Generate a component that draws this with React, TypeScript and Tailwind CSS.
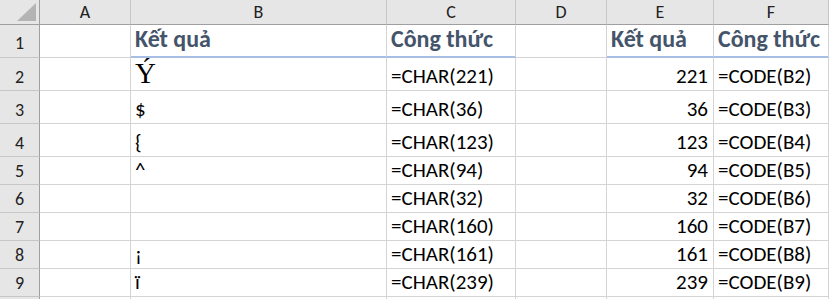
import React from "react";

const font = { fontFamily: "Carlito, Lato, 'Open Sans', sans-serif" };

type Row = { n: number; b?: React.ReactNode; c?: string; e?: string; f?: string };

const rows: Row[] = [
  { n: 2, b: "Ý", c: "=CHAR(221)", e: "221", f: "=CODE(B2)" },
  { n: 3, b: "$", c: "=CHAR(36)", e: "36", f: "=CODE(B3)" },
  { n: 4, b: "{", c: "=CHAR(123)", e: "123", f: "=CODE(B4)" },
  { n: 5, b: "^", c: "=CHAR(94)", e: "94", f: "=CODE(B5)" },
  { n: 6, b: "", c: "=CHAR(32)", e: "32", f: "=CODE(B6)" },
  { n: 7, b: "", c: "=CHAR(160)", e: "160", f: "=CODE(B7)" },
  { n: 8, b: "¡", c: "=CHAR(161)", e: "161", f: "=CODE(B8)" },
  { n: 9, b: "ï", c: "=CHAR(239)", e: "239", f: "=CODE(B9)" },
  { n: 10, b: "", c: "", e: "", f: "" },
];

function RowHead({ n }: { n: number }) {
  return (
    <div className="flex items-end justify-center bg-[#e6e6e6] border-r border-r-[#9f9f9f] border-b border-b-[#c6c6c6] pb-[2px] text-[18px] leading-[22px] text-[#222]">
      {n < 10 ? n : ""}
    </div>
  );
}

function Cell({ children, right }: { children?: React.ReactNode; right?: boolean }) {
  return (
    <div
      className={`flex items-end border-r border-b border-[#d4d4d4] pl-[4px] pb-[2px] text-[21px] leading-[24px] text-black whitespace-nowrap overflow-hidden ${right ? "justify-end pr-[5px]" : "pr-[4px]"}`}
    >
      {children}
    </div>
  );
}

function Heading({ children }: { children: React.ReactNode }) {
  return (
    <div className="flex items-end pl-[4px] pb-[3px] border-r border-r-[#d4d4d4] border-b-2 border-b-[#a9bee4] font-bold text-[24px] leading-[28px] text-[#44546a] whitespace-nowrap overflow-hidden">
      {children}
    </div>
  );
}

export default function App() {
  const cols = ["A", "B", "C", "D", "E", "F"];
  return (
    <div className="w-[829px] h-[299px] overflow-hidden bg-white" style={font}>
      <div className="grid grid-cols-[40px_91px_256px_129px_91px_107px_1fr] grid-rows-[25px_33px_33px_33px_33px_28px_28px_28px_28px_28px_28px]">
        {/* Header row */}
        <div className="relative bg-[#e6e6e6] border-r border-r-[#9f9f9f] border-b border-b-[#9f9f9f]">
          <svg className="absolute left-0 top-0" width="39" height="24" viewBox="0 0 39 24">
            <polygon points="36,3 36,21 17,21" fill="#b4b4b4" />
          </svg>
        </div>
        {cols.map((c) => (
          <div
            key={c}
            className="flex items-center justify-center bg-[#e6e6e6] border-r border-r-[#c6c6c6] border-b border-b-[#9f9f9f] text-[18px] text-[#222]"
          >
            {c}
          </div>
        ))}

        {/* Row 1 */}
        <div className="flex items-end justify-center bg-[#e6e6e6] border-r border-r-[#9f9f9f] border-b border-b-[#c6c6c6] pb-[3px] text-[18px] leading-[22px] text-[#222]">
          1
        </div>
        <div className="border-r border-b border-[#d4d4d4]" />
        <Heading>Kết quả</Heading>
        <Heading>Công thức</Heading>
        <div className="border-r border-b border-[#d4d4d4]" />
        <Heading>Kết quả</Heading>
        <Heading>Công thức</Heading>

        {rows.map((r) => (
          <React.Fragment key={r.n}>
            <RowHead n={r.n} />
            <Cell />
            {r.n === 2 ? (
              <div className="flex items-end border-r border-b border-[#d4d4d4] pl-[4px] pb-[5px] overflow-hidden">
                <span className="text-[29px] leading-[24px] text-black" style={{ fontFamily: "'Liberation Serif', serif" }}>
                  Ý
                </span>
              </div>
            ) : (
              <Cell>{r.b}</Cell>
            )}
            <Cell>{r.c}</Cell>
            <Cell />
            <Cell right>{r.e}</Cell>
            <Cell>{r.f}</Cell>
          </React.Fragment>
        ))}
      </div>
    </div>
  );
}
